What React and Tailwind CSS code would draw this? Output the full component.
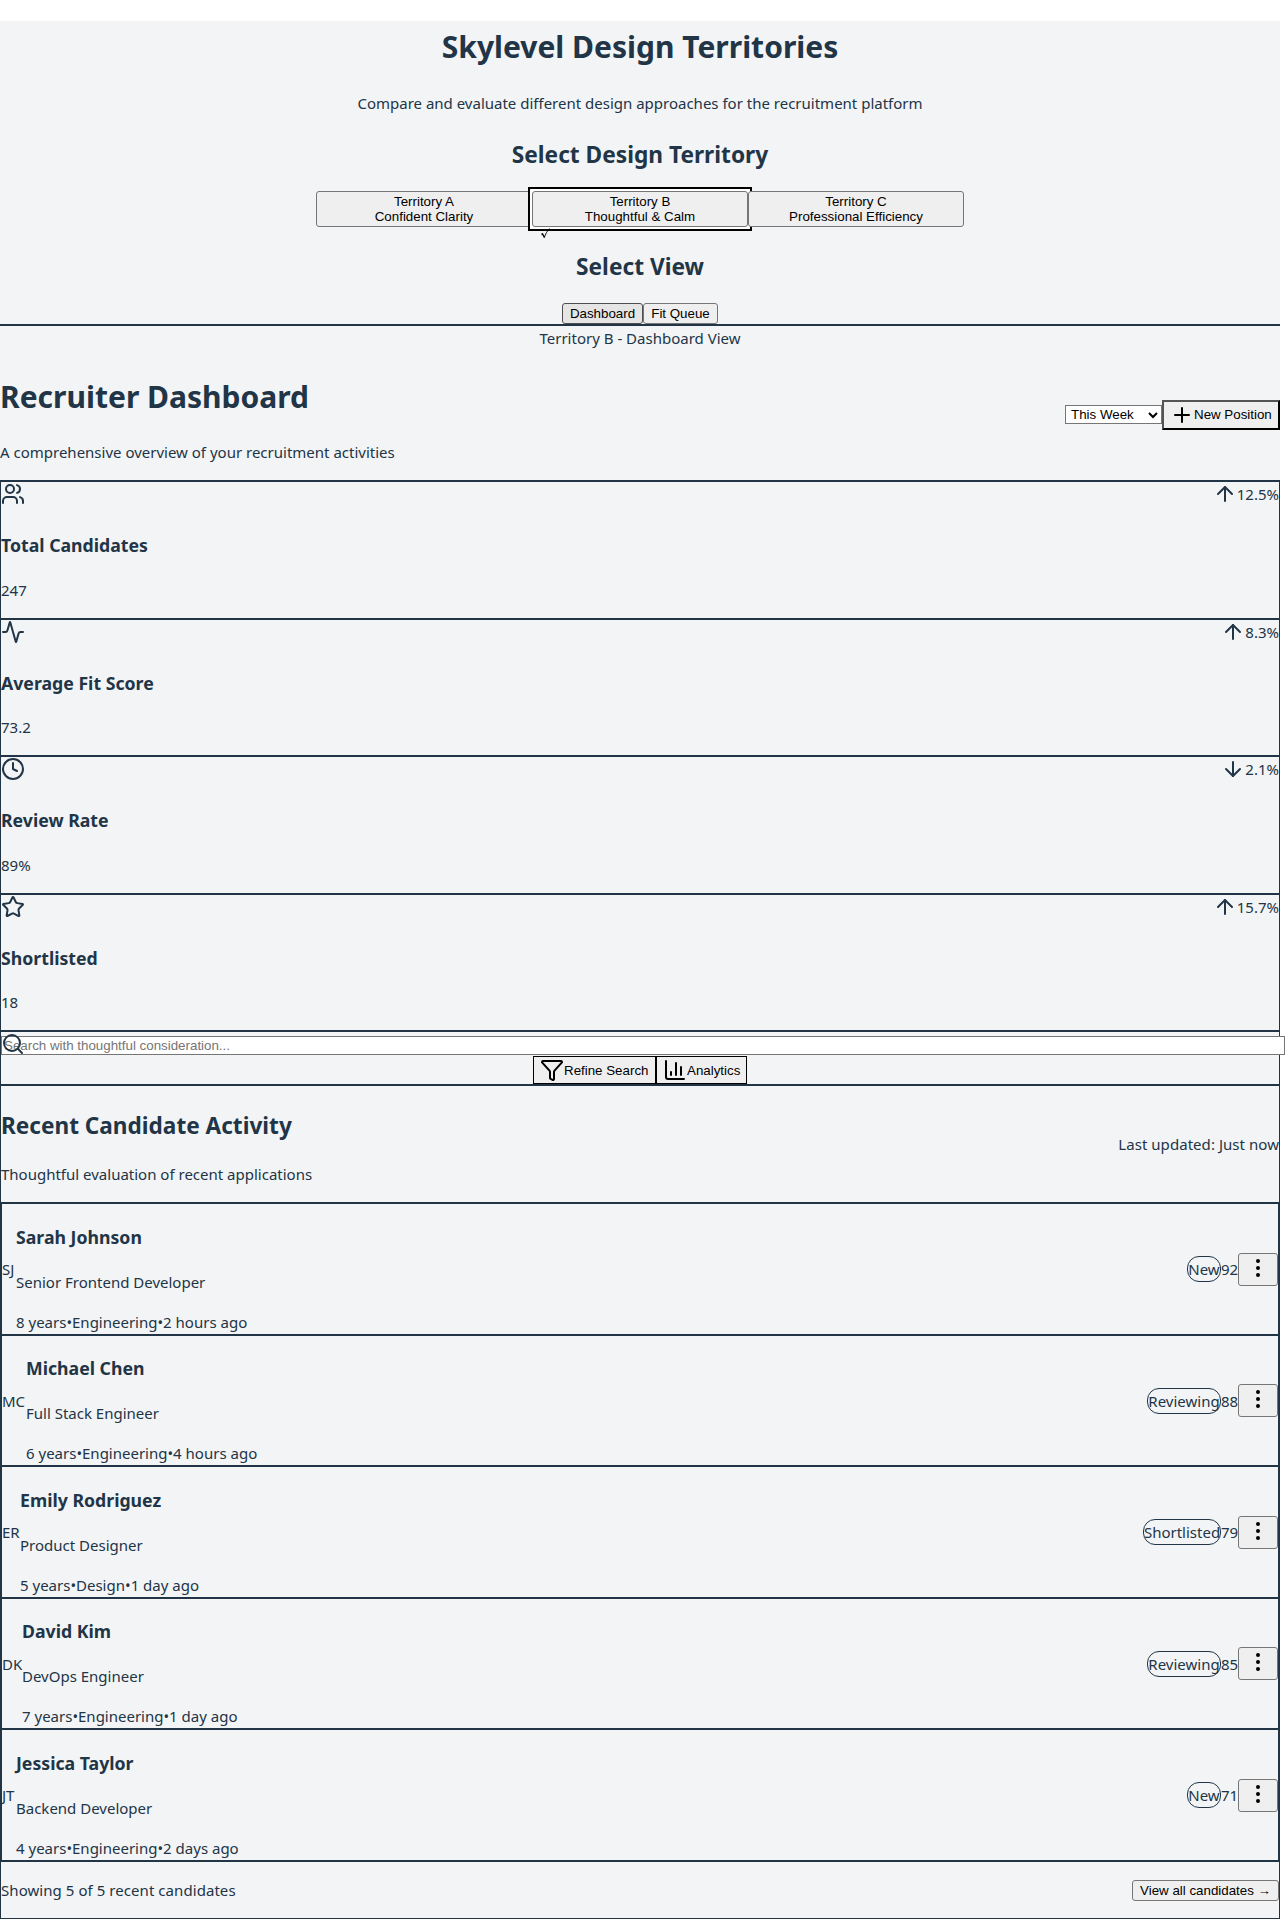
import React from "react";
import {
  Users, Activity, Clock, Star, ArrowUp, ArrowDown, Search, Funnel, ChartColumn, Plus, EllipsisVertical,
} from "lucide-react";

const stats = [
  { icon: Users, label: "Total Candidates", value: "247", up: true, change: "12.5%", h: "h-[138px]", gap: "mt-[21px]" },
  { icon: Activity, label: "Average Fit Score", value: "73.2", up: true, change: "8.3%", h: "h-[137px]", gap: "mt-5" },
  { icon: Clock, label: "Review Rate", value: "89%", up: false, change: "2.1%", h: "h-[138px]", gap: "mt-[21px]" },
  { icon: Star, label: "Shortlisted", value: "18", up: true, change: "15.7%", h: "h-[137px]", gap: "mt-5" },
];

const people = [
  { ini: "SJ", w: "w-[14px]", name: "Sarah Johnson", role: "Senior Frontend Developer", meta: "8 years•Engineering•2 hours ago", status: "New", bw: "w-[34px]", score: 92, h: "h-[132px]", top: "mt-[21px]" },
  { ini: "MC", w: "w-[24px]", name: "Michael Chen", role: "Full Stack Engineer", meta: "6 years•Engineering•4 hours ago", status: "Reviewing", bw: "w-[74px]", score: 88, h: "h-[131px]", top: "mt-5" },
  { ini: "ER", w: "w-[18px]", name: "Emily Rodriguez", role: "Product Designer", meta: "5 years•Design•1 day ago", status: "Shortlisted", bw: "w-[78px]", score: 79, h: "h-[132px]", top: "mt-[21px]" },
  { ini: "DK", w: "w-[20px]", name: "David Kim", role: "DevOps Engineer", meta: "7 years•Engineering•1 day ago", status: "Reviewing", bw: "w-[74px]", score: 85, h: "h-[131px]", top: "mt-5" },
  { ini: "JT", w: "w-[14px]", name: "Jessica Taylor", role: "Backend Developer", meta: "4 years•Engineering•2 days ago", status: "New", bw: "w-[34px]", score: 71, h: "h-[132px]", top: "mt-[21px]" },
];

const btn =
  "font-['Liberation_Sans',sans-serif] text-[13.333px] leading-[15px] text-black border rounded-[3px] whitespace-nowrap";
const idle = "bg-[#efefef] border-[#767676]";
const pressed = "bg-[#e5e5e5] border-[#4f4f4f]";

function Territory({ name, sub, active = false }) {
  return (
    <div className={active ? "relative bg-white ring-2 ring-white outline-2 outline-offset-2 outline-black" : "relative"}>
      <button className={`${btn} ${idle} block w-[216px] h-9`}>
        <div>{name}</div>
        <div>{sub}</div>
      </button>
      {active && (
        <svg className="absolute left-2 top-9 text-black" width="11" height="12" viewBox="0 0 11 12" fill="none" stroke="currentColor">
          <path d="M1.5 7.5l1-.5 2 3.5" strokeWidth="1.4" />
          <path d="M4.3 10.6C5.5 7 7.2 4 9.5 1.5" strokeWidth="0.9" />
        </svg>
      )}
    </div>
  );
}

function Stat({ icon: Icon, label, value, up, change, h, gap }) {
  const Arrow = up ? ArrowUp : ArrowDown;
  return (
    <div className={`border-t-2 border-[#213547] ${h}`}>
      <div className="flex justify-between h-6">
        <Icon size={24} />
        <div className="flex">
          <Arrow size={24} />
          <span>{change}</span>
        </div>
      </div>
      <h3 className="mt-[27px] text-[17.7px] leading-6 font-bold">{label}</h3>
      <p className={gap}>{value}</p>
    </div>
  );
}

function Row({ p }) {
  return (
    <div className={`flex justify-between items-center border-t-2 border-x border-[#213547] ${p.h}`}>
      <div className="flex items-center h-full">
        <span className={p.w}>{p.ini}</span>
        <div className="self-start">
          <h3 className={`${p.top} text-[17.7px] leading-6 font-bold`}>{p.name}</h3>
          <p className="mt-[21px]">{p.role}</p>
          <p className="mt-4">{p.meta}</p>
        </div>
      </div>
      <div className="flex items-center">
        <span className={`${p.bw} h-[26px] flex justify-center border border-[#213547] rounded-xl`}>{p.status}</span>
        <span className="w-[17px] flex justify-center">{p.score}</span>
        <button className={`${btn} ${idle} w-10 h-[33px] flex justify-center pt-0.5`}>
          <EllipsisVertical size={24} className="shrink-0" />
        </button>
      </div>
    </div>
  );
}

export default function App() {
  return (
    <div className="w-[1285px] h-[1919px] overflow-hidden bg-white pt-[21px]">
      <div className="w-[1280px] bg-[#f3f4f6] text-[#213547] font-['Noto_Sans',sans-serif] text-[15px] leading-6 whitespace-nowrap">
        <header className="h-[305px] border-b-2 border-[#213547] pt-1.5 flex flex-col items-center">
          <h1 className="text-[30px] leading-10 font-bold">Skylevel Design Territories</h1>
          <p className="mt-6">Compare and evaluate different design approaches for the recruitment platform</p>
          <h2 className="mt-6 text-[22.7px] leading-8 font-bold">Select Design Territory</h2>
          <div className="mt-5 flex">
            <Territory name="Territory A" sub="Confident Clarity" />
            <Territory name="Territory B" sub="Thoughtful & Calm" active />
            <Territory name="Territory C" sub="Professional Efficiency" />
          </div>
          <h2 className="mt-6 text-[22.7px] leading-8 font-bold">Select View</h2>
          <div className="mt-5 flex">
            <button className={`${btn} ${pressed} w-[81px] h-[21px]`}>Dashboard</button>
            <button className={`${btn} ${idle} w-[75px] h-[21px]`}>Fit Queue</button>
          </div>
        </header>
        <div className="text-center">Territory B - Dashboard View</div>
        <div className="flex justify-between items-center h-[130px]">
          <div className="self-start pt-[27px]">
            <h1 className="text-[30px] leading-10 font-bold">Recruiter Dashboard</h1>
            <p className="mt-[23px]">A comprehensive overview of your recruitment activities</p>
          </div>
          <div className="flex items-center font-['Liberation_Sans',sans-serif] text-[13.333px] leading-[15px] text-black">
            <div className="w-[97px] h-[19px] -mt-px flex items-center justify-between bg-white border border-[#767676] pl-[5px] pr-[3px]">
              <span>This Week</span>
              <svg width="10" height="8" viewBox="0 0 10 8" fill="none" stroke="black" strokeWidth="2">
                <path d="M1 2l4 4 4-4" />
              </svg>
            </div>
            <button className="w-[118px] h-[30px] flex items-center bg-[#efefef] border-2 [border-style:outset] border-black pl-1.5">
              <Plus size={24} />
              <span className="pb-px">New Position</span>
            </button>
          </div>
        </div>
        <div className="border-x border-b border-[#213547] h-[1439px]">
          {stats.map((s) => (
            <Stat key={s.label} {...s} />
          ))}
          <div className="relative h-14 border-y-2 border-[#213547]">
            <input
              placeholder="Search with thoughtful consideration..."
              className="block mt-1 w-[1284px] h-[19px] bg-white border border-[#767676] px-0.5 font-['Liberation_Sans',sans-serif] text-[13.333px] leading-[15px] placeholder:text-[#757575]"
            />
            <Search size={24} className="absolute left-0 top-0" />
            <div className="mt-px flex justify-center font-['Liberation_Sans',sans-serif] text-[13.333px] text-black">
              <button className="w-[123px] h-7 flex items-center bg-[#efefef] border border-black pl-1.5">
                <Funnel size={24} />
                <span className="pt-px">Refine Search</span>
              </button>
              <button className="w-[91px] h-7 flex items-center bg-[#efefef] border border-black pl-1.5">
                <ChartColumn size={24} />
                <span className="pt-px">Analytics</span>
              </button>
            </div>
          </div>
          <div className="flex justify-between items-center h-[116px]">
            <div className="self-start pt-6">
              <h2 className="text-[22.6px] leading-8 font-bold">Recent Candidate Activity</h2>
              <p className="mt-5">Thoughtful evaluation of recent applications</p>
            </div>
            <span className="tracking-[0.05px]">Last updated: Just now</span>
          </div>
          {people.map((p) => (
            <Row key={p.name} p={p} />
          ))}
          <div className="flex justify-between items-center h-[58px] border-t-2 border-[#213547]">
            <span className="tracking-[0.06px]">Showing 5 of 5 recent candidates</span>
            <button className={`${btn} ${idle} w-[147px] h-[21px]`}>View all candidates →</button>
          </div>
        </div>
      </div>
    </div>
  );
}
